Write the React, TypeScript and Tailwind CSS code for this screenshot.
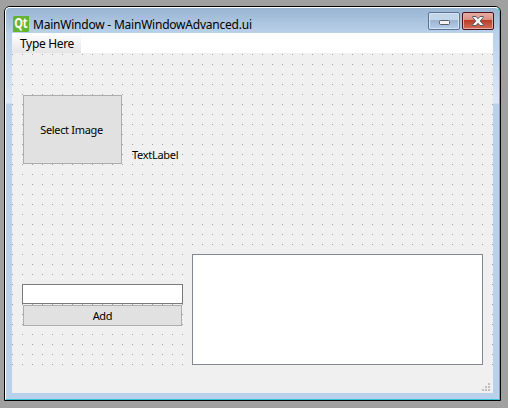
const dots =
  "bg-[linear-gradient(to_right,transparent_1px,#f0f0f0_1px),linear-gradient(to_bottom,#a0a0a0_1px,#f0f0f0_1px)] bg-[length:10px_10px] bg-[position:0_1px]";

function TitleBar() {
  return (
    <header className="flex h-[25px] shrink-0 items-start pl-[7px] pr-[5px]">
      <svg className="mt-[8px] h-4 w-4 shrink-0 overflow-visible" viewBox="0 0 16 16">
        <path d="M1 0H16V15L15 16H0V1Z" fill="#65b32e" />
        <text x="1.3" y="12.3" fontFamily="Open Sans, sans-serif" fontWeight="700" fontSize="13.5" fill="#fff" textLength="13" lengthAdjust="spacingAndGlyphs">Qt</text>
      </svg>
      <h1 className="ml-[4px] mt-[8px] grow whitespace-nowrap text-[12px] leading-[17px] tracking-[-0.22px]">MainWindow - MainWindowAdvanced.ui</h1>
      <div className="mt-[4px] flex gap-[2px]">
        <button className="flex h-[18px] w-8 items-center justify-center rounded-[2px] border border-[#5a7294] bg-[linear-gradient(#c3d5e9_0_45%,#9ab4d2_45%,#b6cee8)] shadow-[inset_0_0_0_1px_#d5e3f2]">
          <svg width="11" height="5" className="mt-[3px]"><rect x=".5" y=".5" width="10" height="4" rx="1" fill="#f4f4f4" stroke="#555b68" /></svg>
        </button>
        <button className="flex h-[18px] w-8 items-center justify-center rounded-[2px] border border-[#46131c] bg-[linear-gradient(#e4a79c_0_10%,#d98d80_45%,#b83c24_45%,#ce705b)] shadow-[inset_0_0_0_1px_#e8aaa0]">
          <svg width="12" height="10" viewBox="0 0 12 10"><path d="M.7.5H4L6 2.7 8 .5h3.3v1L8.2 5l3.1 3.5v1H8L6 7.3 4 9.5H.7v-1L3.8 5 .7 1.5Z" fill="#f5f5f5" stroke="#565965" /></svg>
        </button>
      </div>
    </header>
  );
}

export default function App() {
  return (
    <div className="h-[408px] w-[508px] overflow-hidden bg-[#a0a0a0] pl-[4px] pt-[6px] font-['Noto_Sans','Open_Sans',sans-serif] text-[11px] tracking-[-0.28px] text-black">
      <div className="h-[395px] w-[497px] rounded-t-[6px] border border-black bg-[#b9d1ea]">
        <div className="flex h-full flex-col rounded-t-[5px] border border-b-[#35c5db] border-l-white border-r-[#35c5db] border-t-white bg-[linear-gradient(#99b4d1,#b9d1ea_25px,#dce8f6_95px,#b9d1ea_96px)]">
          <TitleBar />
          <main className="ml-[6px] flex h-[360px] w-[481px] flex-col bg-[#f0f0f0]">
            <nav className="h-5 bg-white">
              <div className="h-5 w-[69px] bg-linear-to-b from-white to-[#e5e5e5] pl-[8px] pt-[2px] text-[12px] leading-[18px] tracking-[-0.33px]">Type Here</div>
            </nav>
            <section className={"flex h-[320px] justify-between pl-[10px] pr-[10px] " + dots}>
              <div className="flex w-[161px] flex-col pt-[42px]">
                <div className="flex items-end">
                  <button className="ml-px h-[69px] w-[99px] shrink-0 border border-[#adadad] bg-[#e1e1e1] pr-[2px] pt-[2px] tracking-[-0.33px]">Select Image</button>
                  <span className="mb-px ml-[10px] leading-[17px]">TextLabel</span>
                </div>
                <input className="mt-[120px] h-5 w-[161px] border border-[#7a7a7a] bg-white" />
                <button className="ml-px mt-px h-[21px] w-[159px] border border-[#adadad] bg-[#e1e1e1] leading-[19px]">Add</button>
              </div>
              <div className="mt-[201px] h-[111px] w-[291px] border border-[#828790] bg-white" />
            </section>
            <footer className="flex h-5 items-end justify-end pb-[2px] pr-[3px]">
              <svg width="8" height="8" fill="#bfbfbf"><path d="M6 0h2v2H6zM3 3h2v2H3zM6 3h2v2H6zM0 6h2v2H0zM3 6h2v2H3zM6 6h2v2H6z" /></svg>
            </footer>
          </main>
        </div>
      </div>
    </div>
  );
}
